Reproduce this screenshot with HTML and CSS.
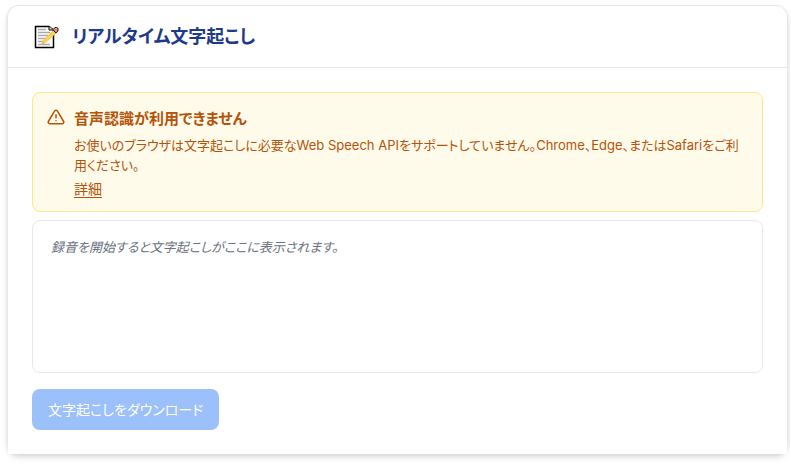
FILE: index.html
```html
<!DOCTYPE html>
<html lang="ja">
<head>
  <meta charset="UTF-8">
  <meta name="viewport" content="width=device-width, initial-scale=1.0">
  <title>リアルタイム文字起こし</title>
  <link rel="stylesheet" href="styles.css">
</head>
<body>
  <main class="card">
    <header class="card-header">
      <svg class="memo-icon" viewBox="0 0 26 26" aria-hidden="true">
        <path d="M2.5 2.5H16L20.5 6V23.500H2.500Z" fill="#fff" stroke="#000" stroke-width="1.500"/>
        <path d="M16 2.500V6H20.500" fill="#ddd" stroke="#000" stroke-width="1"/>
        <path d="M5 5.500H13M5 8.500H17M5 11.500H15M5 14.500H13M5 17.500H10M5 20.500H17" stroke="#aaa" stroke-width="1.300"/>
        <path d="M8.500 20.500L10 16.500L20.500 6L23.500 9L13 18.500Z" fill="#fbc847"/>
        <path d="M11.500 18L22 7.500" stroke="#ffdf72" stroke-width="1"/>
        <path d="M8.500 20.500L9.500 17.800L11.500 19.500Z" fill="#efb36a"/>
        <path d="M20 5.500L22 3.500Q23.500 2.800 25 4.500Q25.500 6 24.500 7.500L22.800 9Z" fill="#e58d80" stroke="#1a1010" stroke-width="1"/>
      </svg>
      <h1 class="card-title">リアルタイム文字起こし</h1>
    </header>
    <div class="card-body">
      <section class="alert" role="alert">
        <svg class="alert-icon" viewBox="0 0 24 24" fill="none" stroke="currentColor" stroke-width="2" stroke-linecap="round" stroke-linejoin="round" aria-hidden="true">
          <path d="M10.290 3.860L1.820 18a2 2 0 0 0 1.710 3h16.940a2 2 0 0 0 1.710-3L13.710 3.860a2 2 0 0 0-3.420 0z"/>
          <path d="M12 9v4M12 17h.01"/>
        </svg>
        <div class="alert-content">
          <h2 class="alert-title">音声認識が利用できません</h2>
          <p class="alert-text">お使いのブラウザは文字起こしに必要なWeb Speech APIをサポートしていません。Chrome、Edge、またはSafariをご利用ください。</p>
          <a class="alert-link" href="#">詳細</a>
        </div>
      </section>
      <div class="transcript">
        <p class="placeholder">録音を開始すると文字起こしがここに表示されます。</p>
      </div>
      <button class="download" type="button" disabled>文字起こしをダウンロード</button>
    </div>
  </main>
</body>
</html>
```
FILE: styles.css
```css
* {
  box-sizing: border-box;
}

body {
  margin: 0;
  padding: 5px 3px 11px 7px;
  background: #fff;
  font-family: Inter, "Noto Sans CJK JP", sans-serif;
  font-size: 13px;
  line-height: 20px;
  font-feature-settings: "palt";
}

h1, h2, p {
  margin: 0;
}

.card {
  border: 1px solid #e5e7eb;
  border-bottom: 0;
  border-radius: 12px;
  box-shadow: 0 4px 6px rgba(0, 0, 0, .1), 0 2px 4px -1px rgba(0, 0, 0, .1);
}

.card-header {
  display: flex;
  align-items: center;
  gap: 12px;
  padding: 16px 24px;
  border-bottom: 1px solid #e5e7eb;
}

.memo-icon {
  width: 28px;
  height: 26px;
}

.card-title {
  color: #1e3a8a;
  font-size: 18px;
  font-weight: 600;
  line-height: 29px;
}

.card-body {
  padding: 24px;
  background: #fff;
}

.alert {
  display: flex;
  gap: 9px;
  padding: 15px 15px 12px 14px;
  border: 1px solid #fde68a;
  border-radius: 8px;
  background: #fffbeb;
  color: #b45309;
}

.alert-icon {
  flex: none;
  width: 18px;
  height: 18px;
}

.alert-title {
  font-size: 15px;
  font-weight: 600;
  line-height: 22px;
}

.alert-text {
  margin: 5px 0 4px;
}

.alert-link {
  display: block;
  width: fit-content;
  color: inherit;
  font-size: 14px;
  text-underline-offset: 3px;
}

.transcript {
  height: 153px;
  margin: 8px 0 16px;
  padding: 16px 18px;
  border: 1px solid #e5e7eb;
  border-radius: 8px;
}

.placeholder {
  color: #6b7280;
  font-style: italic;
}

.download {
  display: block;
  padding: 8px 16px;
  border: 0;
  border-radius: 8px;
  background: #3b82f6;
  color: #fff;
  font: inherit;
  font-size: 14px;
  line-height: 25px;
  font-feature-settings: inherit;
}

.download:disabled {
  opacity: .5;
}
```
